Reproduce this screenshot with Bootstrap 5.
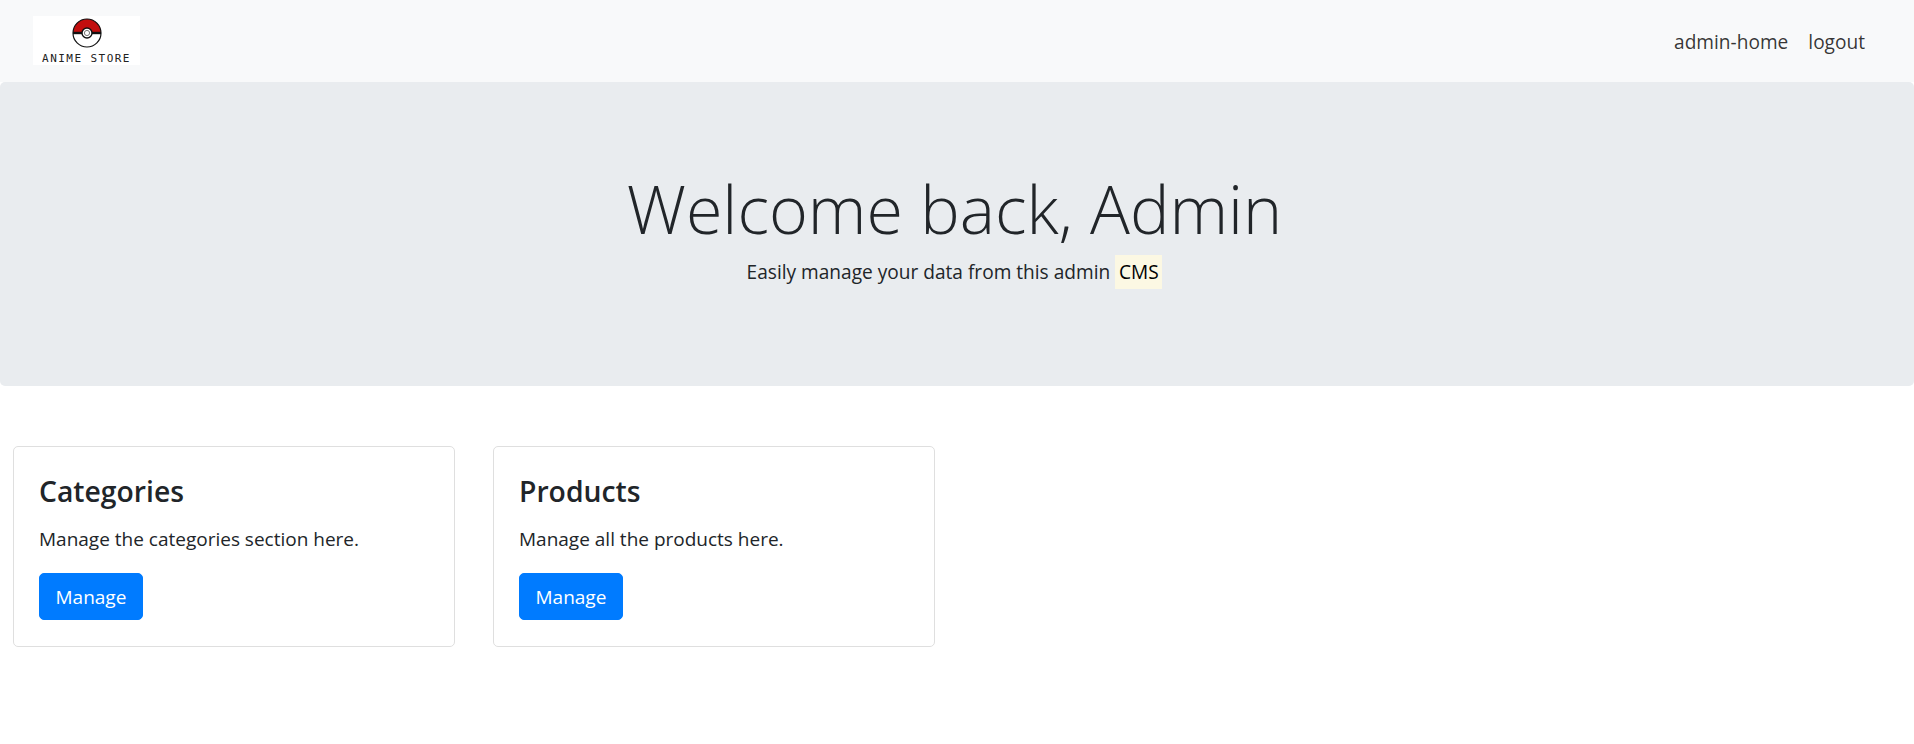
<!DOCTYPE html>
<html lang="en"><head><meta charset="utf-8">
<link href="https://cdn.jsdelivr.net/npm/bootstrap@5.3.0/dist/css/bootstrap.min.css" rel="stylesheet">
<style>
body{font-family:"Open Sans","Noto Sans",sans-serif;font-size:19px;color:#212529;}
.topbar{height:82px;padding:0 39px 0 33px;}
.logo-box{width:107px;height:49px;background:#fff;text-align:center;overflow:hidden;padding-top:2px;text-decoration:none;margin-top:-2px;}
.logo-text{font-family:"DejaVu Sans Mono",monospace;font-size:11px;letter-spacing:1.45px;line-height:10px;color:#222;white-space:nowrap;margin-top:6px;}
.topbar .nav-link{color:rgba(0,0,0,.8);font-size:19.1px;padding:10px 10px 8px;}
.hero{background:#e9ecef;height:304px;border-radius:5px;padding:86px 5px 0 0;}
.hero h1{font-size:66.4px;font-weight:300;line-height:80px;margin:0 0 11px;}
.hero p{margin:0;line-height:27px;font-size:19.1px;}
.hero mark{background:#fcf8e3;padding:4px 3.8px;}
.cards-row{padding:60px 13px 0;gap:38px;}
.tile{width:442px;height:201px;border-color:#dfdfdf;border-radius:5px;}
.tile .card-body{padding:26px 25px;}
.tile .card-title{font-size:28.3px;font-weight:600;margin-bottom:16px;line-height:36px;}
.tile .card-text{margin-bottom:19px;line-height:29px;}
.tile .btn{background:#007bff;border-color:#007bff;font-size:19px;padding:9px 15.5px 7px;border-radius:5px;line-height:29px;}
</style></head><body>
<nav class="navbar bg-light topbar d-flex justify-content-between align-items-center">
<a class="logo-box d-block" href="#"><svg width="30" height="30" viewBox="0 0 30 30" class="d-block mx-auto"><path d="M1 15a14 14 0 0 1 28 0z" fill="#c20e0e"/><circle cx="15" cy="15" r="14" fill="none" stroke="#111" stroke-width="1.2"/><path d="M1 15h28" stroke="#111" stroke-width="2.4"/><circle cx="15" cy="15" r="5" fill="#fff" stroke="#111" stroke-width="1.4"/><circle cx="15" cy="15" r="2.6" fill="#fff" stroke="#777" stroke-width="1"/></svg><div class="logo-text">ANIME STORE</div></a>
<div class="d-flex"><a class="nav-link" href="#">admin-home</a><a class="nav-link" href="#">logout</a></div>
</nav>
<section class="hero text-center"><h1>Welcome back, Admin</h1><p>Easily manage your data from this admin <mark>CMS</mark></p></section>
<div class="d-flex cards-row">
<div class="card tile"><div class="card-body"><h5 class="card-title">Categories</h5><p class="card-text">Manage the categories section here.</p><a class="btn btn-primary" href="#">Manage</a></div></div>
<div class="card tile"><div class="card-body"><h5 class="card-title">Products</h5><p class="card-text">Manage all the products here.</p><a class="btn btn-primary" href="#">Manage</a></div></div>
</div>
</body></html>
